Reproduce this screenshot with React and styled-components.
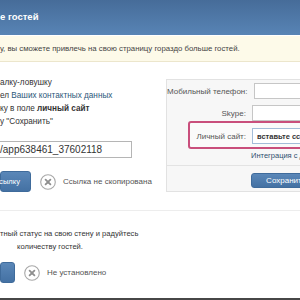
import React from "react";
import styled, { createGlobalStyle } from "styled-components";

const Global = createGlobalStyle`
  html, body { margin: 0; padding: 0; background: #fff; }
  body { width: 300px; height: 300px; overflow: hidden; font-family: "Liberation Sans", Arial, sans-serif; }
  * { box-sizing: border-box; }
`;

const Page = styled.div`
  width: 300px;
  height: 300px;
  display: flex;
  flex-direction: column;
  overflow: hidden;
`;

const Header = styled.div`
  height: 35px;
  flex: 0 0 35px;
  background: linear-gradient(#466c99, #5884b5);
  display: flex;
  align-items: center;
  padding-bottom: 2px;
  color: #fff;
  font-weight: bold;
  font-size: 9.5px;
`;

const Notice = styled.div`
  margin-top: 1px;
  height: 26px;
  flex: 0 0 26px;
  background: #fdfae9;
  border-bottom: 1px solid #ece6cc;
  display: flex;
  align-items: center;
  font-size: 7.8px;
  color: #444;
  white-space: nowrap;
`;

const Section = styled.div`
  display: flex;
  align-items: flex-start;
  padding-bottom: 18px;
  border-bottom: 1px solid #ededed;
`;

const LeftCol = styled.div`
  flex: 0 0 166px;
  padding-top: 14px;
  display: flex;
  flex-direction: column;
`;

const Line = styled.div`
  font-size: ${(p) => p.$fs || 8.2}px;
  line-height: 13px;
  height: 13px;
  color: #333;
  white-space: nowrap;
  padding-left: ${(p) => p.$indent || 0}px;
`;

const Link = styled.span`
  color: #2b587a;
`;

const LinkInput = styled.div`
  margin-top: 13px;
  width: 132px;
  height: 17px;
  border: 1px solid #b5b5b5;
  border-left: none;
  display: flex;
  align-items: center;
  font-size: 10px;
  color: #333;
  white-space: nowrap;
`;

const ActionRow = styled.div`
  margin-top: ${(p) => p.$mt}px;
  display: flex;
  align-items: center;
  height: 21px;
`;

const BlueButton = styled.div`
  height: ${(p) => p.$h || 21}px;
  width: ${(p) => p.$w}px;
  margin-left: ${(p) => p.$ml || 0}px;
  background: linear-gradient(#5a87b8, #4471a3);
  border: 1px solid #3f6b9b;
  border-radius: 3px;
  color: #fff;
  font-size: ${(p) => p.$fs || 7.6}px;
  display: flex;
  align-items: center;
  justify-content: ${(p) => (p.$center ? "center" : "flex-end")};
  padding-right: ${(p) => (p.$center ? 0 : 10)}px;
  white-space: nowrap;
  flex-shrink: 0;
`;

const StatusIcon = styled.svg`
  width: 16px;
  height: 16px;
  margin-left: ${(p) => p.$ml}px;
  flex-shrink: 0;
`;

const StatusText = styled.span`
  margin-left: ${(p) => p.$ml}px;
  font-size: 8px;
  color: #555;
  white-space: nowrap;
`;

const Panel = styled.div`
  flex: 0 0 150px;
  margin-top: 17px;
  background: #f7f7f7;
  border: 1px solid #e2e2e2;
  padding: 3px 0 3px 0;
  display: flex;
  flex-direction: column;
`;

const FieldRow = styled.div`
  display: flex;
  align-items: center;
  height: ${(p) => p.$h || 16}px;
  margin-top: ${(p) => p.$mt || 0}px;
  margin-bottom: ${(p) => p.$mb || 0}px;
`;

const Label = styled.div`
  flex: 0 0 ${(p) => p.$w}px;
  text-align: right;
  padding-right: 6px;
  font-size: 8px;
  color: #555;
  white-space: nowrap;
`;

const Field = styled.div`
  flex: 0 0 80px;
  height: 16px;
  background: #fff;
  border: 1px solid ${(p) => (p.$focus ? "#a3bdd9" : "#c6c6c6")};
  font-size: 7.5px;
  font-weight: ${(p) => (p.$focus ? "bold" : "normal")};
  color: #333;
  display: flex;
  align-items: center;
  padding-left: 4px;
  white-space: nowrap;
`;

const Highlight = styled.div`
  margin-left: 21px;
  border: 2px solid #c94f7c;
  border-radius: 3px;
  padding: 5px 0 3px 0;
  background: #fafafa;
`;

const PanelLink = styled.div`
  margin-left: 84px;
  height: 14px;
  line-height: 14px;
  font-size: 7.5px;
  color: #2f4f6e;
  white-space: nowrap;
`;

const PanelDivider = styled.div`
  margin-top: 2px;
  border-top: 1px solid #e3e3e3;
`;

const StatusSection = styled.div`
  padding-top: 16px;
  display: flex;
  flex-direction: column;
`;

const Spacer = styled.div`
  flex: 1;
`;

const Footer = styled.div`
  height: 2px;
  flex: 0 0 2px;
  background: #474747;
`;

const XCircle = ({ ml }) => (
  <StatusIcon $ml={ml} viewBox="0 0 16 16">
    <circle cx="8" cy="8" r="7.3" fill="#fff" stroke="#a8a8a8" strokeWidth="1.1" />
    <path d="M5.6 5.6 L10.4 10.4 M10.4 5.6 L5.6 10.4" stroke="#8f8f8f" strokeWidth="1.8" strokeLinecap="round" />
  </StatusIcon>
);

export default function App() {
  return (
    <Page>
      <Global />
      <Header>е гостей</Header>
      <Notice>у, вы сможете привлечь на свою страницу гораздо больше гостей.</Notice>
      <Section>
        <LeftCol>
          <Line>алку-ловушку</Line>
          <Line>
            ел <Link>Ваших контактных данных</Link>
          </Line>
          <Line>
            ку в поле <b>личный сайт</b>
          </Line>
          <Line>у "Сохранить"</Line>
          <LinkInput>/app638461_37602118</LinkInput>
          <ActionRow $mt={13}>
            <BlueButton $w={31}>ссылку</BlueButton>
            <XCircle ml={9} />
            <StatusText $ml={7}>Ссылка не скопирована</StatusText>
          </ActionRow>
        </LeftCol>
        <Panel>
          <FieldRow $mb={6}>
            <Label $w={85}>Мобильный телефон:</Label>
            <Field />
          </FieldRow>
          <FieldRow>
            <Label $w={85}>Skype:</Label>
            <Field />
          </FieldRow>
          <Highlight>
            <FieldRow>
              <Label $w={62}>Личный сайт:</Label>
              <Field $focus>вставьте ссылку</Field>
            </FieldRow>
          </Highlight>
          <PanelLink>Интеграция с другими сервисами</PanelLink>
          <PanelDivider />
          <FieldRow $h={15} $mt={7}>
            <BlueButton $h={15} $w={70} $ml={84} $fs={8} $center>
              Сохранить
            </BlueButton>
          </FieldRow>
        </Panel>
      </Section>
      <StatusSection>
        <Line $fs={7.6}>тный статус на свою стену и радуйтесь</Line>
        <Line $fs={7.6} $indent={17}>количеству гостей.</Line>
        <ActionRow $mt={9}>
          <BlueButton $w={15} />
          <XCircle ml={9} />
          <StatusText $ml={7}>Не установлено</StatusText>
        </ActionRow>
      </StatusSection>
      <Spacer />
      <Footer />
    </Page>
  );
}
